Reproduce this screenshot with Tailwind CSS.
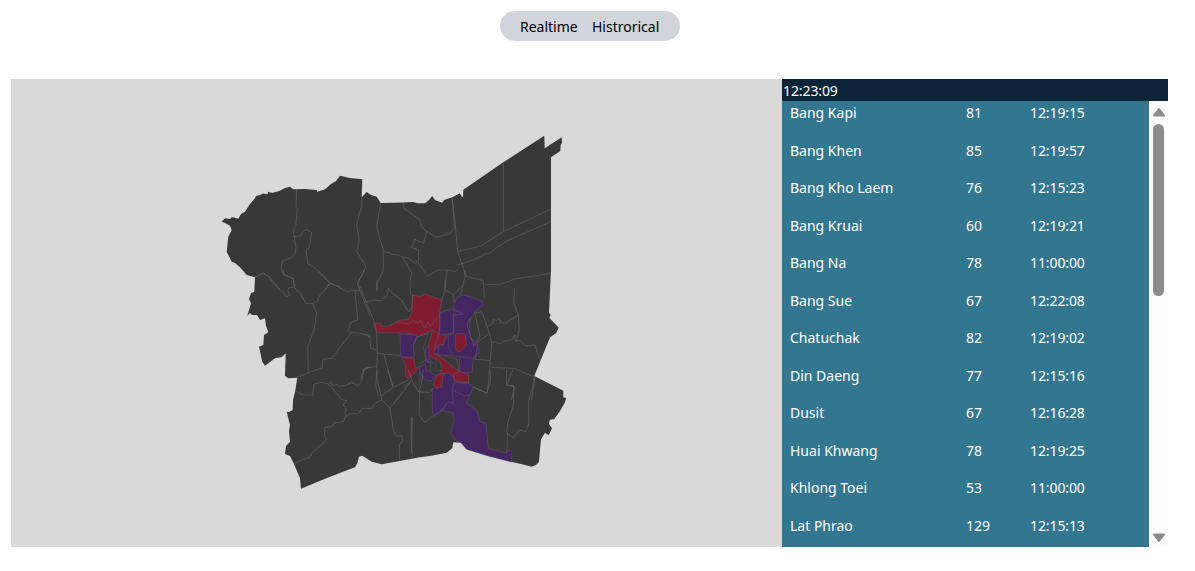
<!DOCTYPE html>
<html lang="en">
<head>
<meta charset="utf-8">
<title>Bangkok districts</title>
<script src="https://cdn.jsdelivr.net/npm/@tailwindcss/browser@4"></script>
</head>
<body class="h-[571px] overflow-hidden bg-white font-['Noto_Sans',sans-serif] text-[14px] leading-[22.5px] text-black">
<nav class="flex justify-center pt-[11px] pr-[15px]">
  <div class="flex h-[30px] w-[180px] items-center gap-[15px] rounded-full bg-[#d1d5db] pt-0.5 pl-5 whitespace-nowrap">
    <span class="w-[57px]">Realtime</span><span>Histrorical</span>
  </div>
</nav>
<main class="mt-[38px] ml-[11px] flex h-[468px] w-[1157px]">
  <section class="h-full w-[771px] bg-[#d9d9d9]">
    <svg class="block h-full w-full" viewBox="11 79 771 468" fill="none" stroke-linejoin="round">
      <path fill="#383838" d="M221.7 221.7L225 218.3L230 219L232 217L238.3 218.7L241 214L245 211.7L250 204L255 198.3L256 196L260 195L263 193.500L267.300 194.300L268.300 191.700L272 193L279.300 191L285 188L290 186.700L293.300 189.300L305 189L316.700 190L317.300 191.700L325 189.300L331 184L336 181L340 175.700L350 178L362.300 179.300L361.700 197.300L366.700 192L371 195L376.700 196.700L380.700 203L403 202.500L413.300 202L417.300 203.300L425 203.300L429 200L432.300 196L435 200L442.300 202.700L444 200L452.300 197.300L460 193.300L461.700 196.700L463 196.700L463.300 189.700L503.300 162.300L544.300 135.700L544.700 148.300L561.700 137.300L562 143L560.700 145L560.300 151L551 157.300L551 270L549 312.700L550.700 315L549.300 317.700L558.700 327.700L556 333.300L550 337.300L534.300 376L563.300 390.700L563.300 397.300L566.300 398L565 402.300L560 411L554.300 419L549.700 420L549 424L552 428.300L548.700 435.300L545 432.700L541 439.300L540 450L539 461.700L536 465L531.700 466.700L521 464L511.700 462L488.300 456L466.700 449.300L461 442.700L453.300 442.300L452.300 448.300L446.700 452.700L430 456L418.300 457.500L405 460L381.700 464.300L371.700 461.700L362.300 455.700L359 456.700L357.300 463.300L355 467.300L345 471L325 478.700L301 488.700L300 478.300L294 464L290 456L285 454L286 446L290 441.700L289 431L290 425L288.300 418.300L286.700 411.700L289 412L292.700 410L293 400L295 392L297.300 377.700L288.300 378.300L285 375.700L285.700 353.300L282 357L275 358.300L265 365.700L262.300 361.700L259 346.700L263.300 345L264 335L268.300 332.300L266 326L265 318.300L260 320L257 315L252 315L250 313L247.300 315.700L251 303.300L249 299.300L251 293L254.300 291.700L255 277.300L246.700 275L240 267.300L235 263L231.700 261.700L226.700 251.700L228.300 236.700L231.700 230L230 225.700L225 223Z"/>

      <!-- inner districts -->
      <g transform="translate(360 280) scale(.33333)" stroke="#68556e" stroke-width="1.5">
        <path fill="#811b2e" d="M158 45L180 50L195 42L245 60L238 105L240 135L235 162L258 168L250 192L230 225L270 240L295 275L325 285L325 310L285 302L248 278L248 318L235 325L220 315L240 290L245 262L240 245L205 225L207 190L218 150L175 170L150 160L50 157L40 130L62 130L65 140L90 137L120 120L145 118L155 100Z"/>
        <path d="M90 137L110 125L145 132L160 122L175 130L182 120L193 145L205 125L210 140L238 105M218 150L235 162L225 200L230 225"/>
        <path fill="#442761" d="M120 162L172 165L160 195L163 232L122 230ZM240 100L255 92L280 88L310 102L280 105L280 160L238 165L240 135ZM282 100L282 68L295 50L310 45L345 55L368 65L368 77L350 90L342 100L330 120L328 150L333 175L352 190L360 215L340 235L336 277L300 280L298 230L270 225L245 228L220 218L235 195L250 195L260 165L280 160Z"/>
        <path fill="#811b2e" d="M285 162L315 160L320 195L300 215L288 212Z"/>
        <path fill="#442761" d="M197 205L207 200L208 240L220 250L197 245ZM178 260L195 252L198 270L225 285L215 302L195 300L180 275Z"/>
        <path fill="#811b2e" d="M125 232L163 235L165 262L175 265L145 298L138 290L135 250Z"/>
        <path fill="#383838" d="M235 225L290 235L298 275L260 245Z"/>
        <path d="M265 165L265 200L280 225M235 195L235 220M300 230L340 235M200 240L212 250L210 270L245 272M225 245L230 265M172 170L205 160L190 205L200 240L178 250M172 170L160 195M180 275L180 310"/>
      </g>
      <g transform="translate(405 370) scale(.33333)" stroke="#68556e" stroke-width="1.5">
        <path fill="#442761" d="M82 55L100 55L112 35L110 15L130 8L145 20L150 35L145 45L155 38L190 40L205 52L195 75L185 100L215 122L225 155L243 160L250 235L305 250L308 240L320 243L320 276L250 258L185 238L168 218L155 213L137 190L148 150L145 130L112 120L92 138L82 130Z"/>
        <path d="M145 45L142 60L180 78L195 75M142 60L145 100L128 95L112 120"/>
        <path fill="#811b2e" d="M145 12L165 5L190 12L190 38L150 33ZM85 45L95 15L115 10L110 50L98 54Z"/>
      </g>

      <!-- district borders -->
      <g stroke="#6c6c6c" stroke-width="1.6">
        <path transform="translate(210 160) scale(.33333)" d="M260 88L258 140L262 148L257 200L250 208L252 230L270 228L280 215L287 208L305 217L298 262L288 270L294 312L310 320L340 350L360 370L345 390M252 230L258 262L256 280L240 295L218 303L213 325L222 345L250 355L253 385M360 370L390 380M135 350L147 348L160 338L170 345L180 352L208 388"/>
        <path transform="translate(240 270) scale(.33333)" d="M45 22L65 10L85 18L100 40L132 70L138 82L150 75L143 63L147 53L163 52L180 70L198 100L218 100L232 93L240 75L270 40L235 0M163 52L160 27L130 12L130 0M270 40L290 48L320 65L345 60L360 62L352 40L375 0M345 62L353 150L332 157L325 180L332 188L350 188L390 196M360 62L390 138M218 100L230 130L222 180L203 230L205 308L247 293L248 268L275 265L325 200L332 188M172 322L205 308M165 363L190 375L218 375L222 342L245 337L265 342L275 335L278 348L290 343L295 350L320 345L335 337L355 348L367 330L370 300L390 290"/>
        <path transform="translate(330 160) scale(.33333)" d="M95 112L96 140L88 160L80 195L88 240L80 275L108 318L98 340L83 370L90 390M152 129L140 200L150 240L160 270L160 330L142 368L143 388M160 275L180 278L185 284L205 285L215 290L228 308L245 340L240 365L242 405M220 128L222 145L268 178L275 200L290 215L280 250L255 238L245 262L265 270L266 300L255 310L235 294L215 290M290 215L320 232L345 225L360 220L373 205L367 112M262 305L292 348L325 330L350 330L375 335L385 325M350 330L345 390"/>
        <path transform="translate(440 125) scale(.33333)" d="M37 222L45 290L53 380L70 430L78 455M53 380L85 372L125 362L150 345L190 320L333 252M190 112V320M333 290L200 348L160 375L150 385L138 385L100 405L54 420"/>
        <path transform="translate(460 270) scale(.33333)" d="M15 0L15 18L70 32L73 85M15 18L2 75M75 43L120 43L145 35L165 27L272 10M163 55L162 100L175 135L178 180L168 215M175 135L135 160L122 158L120 145L108 153L100 148L98 160L82 170L95 218L105 215L120 222L135 212L155 210L165 195L165 212L180 212L198 228L225 225L240 270M82 170L65 125L45 130L60 200L42 228L20 165L30 145M95 218L90 285L82 370L38 350M95 292L163 295L225 322L215 390M158 300L140 345L163 350L155 390M92 272L45 268L55 215L85 193"/>
        <path transform="translate(405 370) scale(.33333)" d="M255 0L257 30L245 70L205 52M305 0V45L327 47L325 105L308 160L305 190L325 203L343 180L362 185L372 160L370 95L383 50L388 18M308 190L305 250M20 140L18 200L22 262M45 60L42 135L60 158L80 140L112 120M0 50L20 30L40 65L75 68L82 55M20 30L10 0M55 0L50 40L40 65"/>
        <path transform="translate(275 370) scale(.33333)" d="M160 42L185 70L200 88L215 92L204 105L214 115L210 130L213 138L230 130L250 132L262 115L290 115L303 98L320 90L345 115L355 180L365 200L380 195L383 212L373 225V272M213 138L205 155L180 158L170 170L150 172L148 195L155 210L110 250L105 262L80 270L57 280M345 115L405 38M320 90L318 78L355 52L400 30M318 78L305 20L308 0M355 52L338 0M412 140L410 250"/>
        <path transform="translate(360 280) scale(.33333)" d="M0 20L20 70L45 130L50 157L52 225L48 320L55 348M50 220L72 222L120 226M72 222L97 318M20 65L45 60L65 62L82 45L85 25L95 38L125 60L135 78L145 95L155 85L158 45M50 35V0M245 60L255 30L280 45L283 68M255 30V0M280 45L310 15M0 160L30 170L32 205L50 210M0 300L15 265L50 260"/>
      </g>
    </svg>
  </section>
  <aside class="flex h-full w-[386px] flex-col text-white">
    <header class="h-[22px] shrink-0 bg-[#0c2638] pt-px pl-px tracking-[-0.1px]">12:23:09</header>
    <div class="flex min-h-0 flex-1 bg-[#fcfcfc]">
      <div id="rows" class="w-[367px] overflow-hidden bg-[#33768f] pt-px"></div>
      <div class="flex w-[19px] flex-col items-start pt-1.5 pb-1 pl-[3.5px]">
        <svg class="h-[11px] w-3" viewBox="0 0 12 11"><path fill="#8b8b8b" stroke="#8b8b8b" stroke-width="2" stroke-linejoin="round" d="M6 2L11 8.500H1Z"/></svg>
        <div class="mt-1.5 ml-[0.5px] h-[172px] w-[11px] rounded-full bg-[#8b8b8b]"></div>
        <svg class="mt-auto h-[11px] w-3" viewBox="0 0 12 11"><path fill="#8b8b8b" stroke="#8b8b8b" stroke-width="2" stroke-linejoin="round" d="M6 9L11 2.500H1Z"/></svg>
      </div>
    </div>
  </aside>
</main>
<script>
const data = [
  ['Bang Kapi', 81, '12:19:15'], ['Bang Khen', 85, '12:19:57'], ['Bang Kho Laem', 76, '12:15:23'],
  ['Bang Kruai', 60, '12:19:21'], ['Bang Na', 78, '11:00:00'], ['Bang Sue', 67, '12:22:08'],
  ['Chatuchak', 82, '12:19:02'], ['Din Daeng', 77, '12:15:16'], ['Dusit', 67, '12:16:28'],
  ['Huai Khwang', 78, '12:19:25'], ['Khlong Toei', 53, '11:00:00'], ['Lat Phrao', 129, '12:15:13']
];
document.getElementById('rows').innerHTML = data.map(([name, value, time]) =>
  `<div class="grid h-[37.5px] grid-cols-[176px_64px_1fr] pl-2"><span>${name}</span><span>${value}</span><span class="tracking-[-0.1px]">${time}</span></div>`).join('');
</script>
</body>
</html>
